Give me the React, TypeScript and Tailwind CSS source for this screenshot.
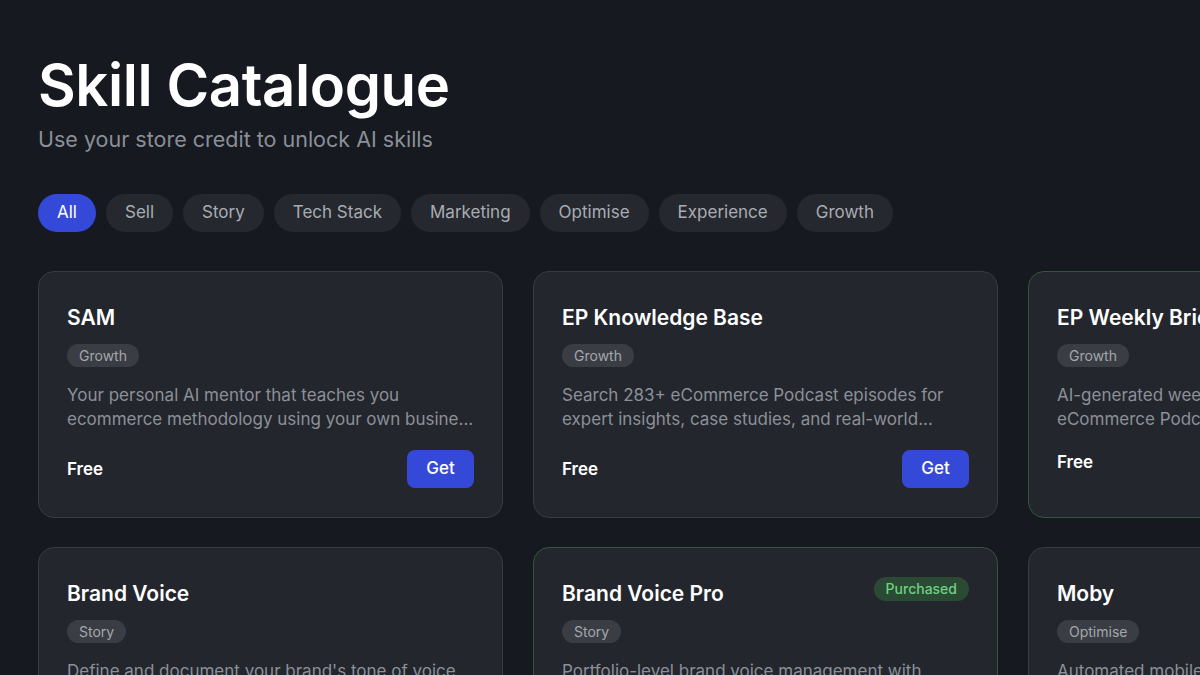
import React from "react";

type Skill = {
  name: string;
  tag: string;
  desc: string;
  price: string;
  purchased?: boolean;
  get?: boolean;
  greenBorder?: boolean;
};

const skills: Skill[] = [
  {
    name: "SAM",
    tag: "Growth",
    desc: "Your personal AI mentor that teaches you ecommerce methodology using your own busine...",
    price: "Free",
    get: true,
  },
  {
    name: "EP Knowledge Base",
    tag: "Growth",
    desc: "Search 283+ eCommerce Podcast episodes for expert insights, case studies, and real-world...",
    price: "Free",
    get: true,
  },
  {
    name: "EP Weekly Brief",
    tag: "Growth",
    desc: "AI-generated weekly briefings from the eCommerce Podcast...",
    price: "Free",
    purchased: true,
    greenBorder: true,
  },
  {
    name: "Brand Voice",
    tag: "Story",
    desc: "Define and document your brand's tone of voice across every channel...",
    price: "Free",
    get: true,
  },
  {
    name: "Brand Voice Pro",
    tag: "Story",
    desc: "Portfolio-level brand voice management with multi-brand guidelines...",
    price: "Free",
    purchased: true,
    greenBorder: true,
  },
  {
    name: "Moby",
    tag: "Optimise",
    desc: "Automated mobile optimisation checks...",
    price: "Free",
    get: true,
  },
];

const filters = ["All", "Sell", "Story", "Tech Stack", "Marketing", "Optimise", "Experience", "Growth"];

function Card({ s }: { s: Skill }) {
  return (
    <div
      className={
        "rounded-[16px] border bg-[#23262c] px-[28px] pt-[28px] pb-[29px] " +
        (s.greenBorder ? "border-[#35553d]" : "border-[#383b42]")
      }
    >
      <div className="flex items-start justify-between">
        <div className="text-[21px] leading-[36px] font-semibold text-white whitespace-nowrap">{s.name}</div>
        {s.purchased && (
          <div className="mt-[1px] h-[24px] px-[12px] rounded-full bg-[#2b4a34] text-[#6fcf82] text-[14px] leading-[24px] font-medium whitespace-nowrap">
            Purchased
          </div>
        )}
      </div>
      <div className="mt-[8px] flex">
        <span className="h-[23px] px-[12px] rounded-full bg-[#3a3d43] text-[#a4a7ad] text-[14px] leading-[23px]">
          {s.tag}
        </span>
      </div>
      <p className="mt-[16px] h-[48px] text-[17px] leading-[24px] text-[#8c9098]">{s.desc}</p>
      <div className="mt-[19px] flex items-center justify-between">
        <span className="text-[17px] leading-[24px] font-semibold text-white">{s.price}</span>
        {s.get && (
          <button className="h-[38px] w-[67px] rounded-[8px] bg-[#3549d9] text-white text-[17px] font-medium">
            Get
          </button>
        )}
      </div>
    </div>
  );
}

export default function App() {
  return (
    <div
      className="w-[1200px] h-[675px] overflow-hidden bg-[#161920]"
      style={{ fontFamily: "Inter, 'Noto Sans', sans-serif" }}
    >
      <div className="pl-[38px] pt-[52px]">
        <h1 className="text-[58px] leading-[66px] font-semibold text-white tracking-[-0.4px] whitespace-nowrap">
          Skill Catalogue
        </h1>
        <p className="mt-[6px] text-[21.5px] leading-[30px] text-[#8b8f97] whitespace-nowrap">
          Use your store credit to unlock AI skills
        </p>
        <div className="mt-[40px] flex gap-[10px]">
          {filters.map((f, i) => (
            <button
              key={f}
              className={
                "h-[38px] px-[19px] rounded-full text-[17px] whitespace-nowrap " +
                (i === 0 ? "bg-[#3549d9] text-white" : "bg-[#25282e] text-[#a9acb2]")
              }
            >
              {f}
            </button>
          ))}
        </div>
        <div className="mt-[39px] grid grid-cols-[repeat(3,465px)] gap-x-[30px] gap-y-[29px]">
          {skills.map((s) => (
            <Card key={s.name} s={s} />
          ))}
        </div>
      </div>
    </div>
  );
}
